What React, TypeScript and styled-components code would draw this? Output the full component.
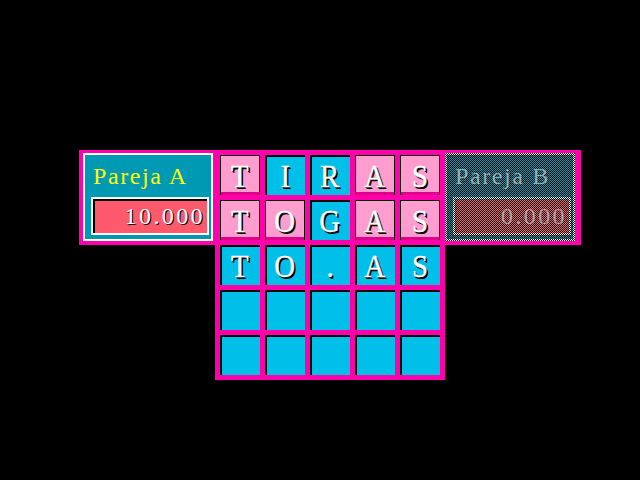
import React from 'react';
import styled, { createGlobalStyle, css } from 'styled-components';

const MAGENTA = '#ff00aa';
const TEAL = '#0099b3';
const SKY = '#00bfe8';
const PINK = '#ff9dcf';
const SALMON = '#ff5a6c';

const Global = createGlobalStyle`
  html, body { margin: 0; padding: 0; background: #000; }
  body { width: 640px; height: 480px; overflow: hidden; font-family: "Liberation Serif", "Times New Roman", serif; }
`;

const Screen = styled.div`
  width: 640px;
  height: 480px;
  box-sizing: border-box;
  padding: 150px 0 0 79px;
  display: flex;
  align-items: flex-start;
`;

const SideFrame = styled.div<{ $side: 'left' | 'right' }>`
  background: ${MAGENTA};
  padding: ${p => (p.$side === 'left' ? '3px 2px 4px 4px' : '3px 6px 4px 0')};
`;

/* Dithered fill: a 1px checkerboard of a colour and black, drawn as an SVG pattern behind content */
const DitherSvg = styled.svg`
  position: absolute;
  inset: 0;
  width: 100%;
  height: 100%;
  z-index: 0;
`;

let ditherSeq = 0;
const Dither: React.FC<{ color: string }> = ({ color }) => {
  const id = React.useMemo(() => `dither-${ditherSeq++}`, []);
  return (
    <DitherSvg shapeRendering="crispEdges" aria-hidden="true">
      <defs>
        <pattern id={id} width="2" height="2" patternUnits="userSpaceOnUse">
          <rect width="2" height="2" fill="#000" />
          <rect x="0" y="0" width="1" height="1" fill={color} />
          <rect x="1" y="1" width="1" height="1" fill={color} />
        </pattern>
      </defs>
      <rect width="100%" height="100%" fill={`url(#${id})`} />
    </DitherSvg>
  );
};

const layered = css`
  position: relative;
  & > *:not(svg) {
    position: relative;
    z-index: 1;
  }
`;

const PanelBorder = styled.div<{ $dim?: boolean }>`
  width: 130px;
  height: 88px;
  box-sizing: border-box;
  padding: 2px;
  background: ${p => (p.$dim ? 'transparent' : '#fff')};
  ${layered}
`;

const PanelBody = styled.div<{ $dim?: boolean }>`
  height: 100%;
  box-sizing: border-box;
  padding: 9px 2px 0 6px;
  display: flex;
  flex-direction: column;
  background: ${p => (p.$dim ? 'transparent' : TEAL)};
  ${layered}
`;

const Title = styled.div<{ $dim?: boolean }>`
  height: 24px;
  line-height: 24px;
  font-size: 24px;
  letter-spacing: 1.6px;
  padding-left: 2px;
  color: ${p => (p.$dim ? '#a8a8a8' : '#ffff00')};
  white-space: nowrap;
`;

const ScoreBorder = styled.div<{ $dim?: boolean }>`
  margin-top: 9px;
  height: 38px;
  box-sizing: border-box;
  padding: 2px;
  background: ${p => (p.$dim ? 'transparent' : '#fff')};
  ${layered}
`;

const ScoreValue = styled.div<{ $dim?: boolean }>`
  height: 100%;
  box-sizing: border-box;
  background: ${p => (p.$dim ? 'transparent' : SALMON)};
  box-shadow: inset 2px 2px 0 #000;
  text-align: right;
  padding-right: 2px;
  font-size: 24px;
  line-height: 34px;
  letter-spacing: 2.4px;
  color: ${p => (p.$dim ? '#a8a8a8' : '#ffffff')};
  text-shadow: ${p => (p.$dim ? 'none' : '1px 1px 0 #000')};
  ${layered}
`;

const ScoreText = styled.span`
  position: relative;
  z-index: 1;
`;

const Board = styled.div`
  background: ${MAGENTA};
  padding: 5px;
  display: grid;
  grid-template-columns: repeat(5, 40px);
  grid-auto-rows: 40px;
  gap: 5px;
`;

const Tile = styled.div<{ $raised?: boolean }>`
  box-sizing: border-box;
  display: flex;
  align-items: center;
  justify-content: center;
  padding-top: 2px;
  font-size: 32px;
  line-height: 40px;
  color: #fff;
  text-shadow: 2px 2px 0 #000, 1px 1px 0 #000;
  -webkit-text-stroke: 0.4px #fff;
  background: ${p => (p.$raised ? PINK : SKY)};
  box-shadow: ${p =>
    p.$raised
      ? 'inset 1px 1px 0 #000, inset -1px 0 0 #000, inset 0 -3px 0 #e0008c'
      : 'inset 2px 2px 0 #000'};
`;

const Glyph = styled.span`
  display: inline-block;
  transform: scaleX(0.9);
`;

type Cell = { ch: string; raised?: boolean };

const rows: Cell[][] = [
  [{ ch: 'T', raised: true }, { ch: 'I' }, { ch: 'R' }, { ch: 'A', raised: true }, { ch: 'S', raised: true }],
  [{ ch: 'T', raised: true }, { ch: 'O', raised: true }, { ch: 'G' }, { ch: 'A', raised: true }, { ch: 'S', raised: true }],
  [{ ch: 'T' }, { ch: 'O' }, { ch: '.' }, { ch: 'A' }, { ch: 'S' }],
  [{ ch: '' }, { ch: '' }, { ch: '' }, { ch: '' }, { ch: '' }],
  [{ ch: '' }, { ch: '' }, { ch: '' }, { ch: '' }, { ch: '' }],
];

const TeamPanel: React.FC<{ name: string; score: string; dim?: boolean }> = ({ name, score, dim }) => (
  <PanelBorder $dim={dim}>
    {dim && <Dither color="#ffffff" />}
    <PanelBody $dim={dim}>
      {dim && <Dither color={TEAL} />}
      <Title $dim={dim}>{name}</Title>
      <ScoreBorder $dim={dim}>
        {dim && <Dither color="#ffffff" />}
        <ScoreValue $dim={dim}>
          {dim && <Dither color={SALMON} />}
          <ScoreText>{score}</ScoreText>
        </ScoreValue>
      </ScoreBorder>
    </PanelBody>
  </PanelBorder>
);

export default function App() {
  return (
    <>
      <Global />
      <Screen>
        <SideFrame $side="left">
          <TeamPanel name="Pareja A" score="10.000" />
        </SideFrame>
        <Board>
          {rows.flatMap((r, i) =>
            r.map((c, j) => (
              <Tile key={`${i}-${j}`} $raised={c.raised}>
                {c.ch && <Glyph>{c.ch}</Glyph>}
              </Tile>
            ))
          )}
        </Board>
        <SideFrame $side="right">
          <TeamPanel name="Pareja B" score="0.000" dim />
        </SideFrame>
      </Screen>
    </>
  );
}
